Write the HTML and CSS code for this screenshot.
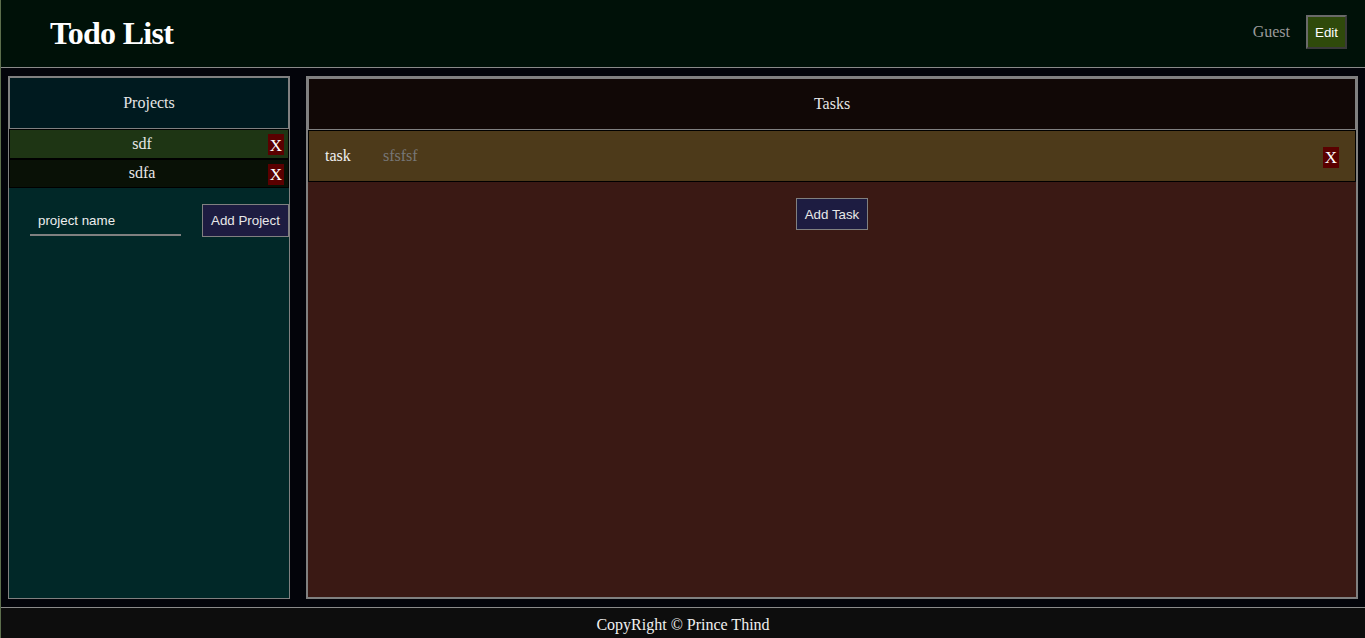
FILE: index.html
```html
<!DOCTYPE html>
<html lang="en">
<head>
<meta charset="utf-8">
<title>Todo List</title>
<link rel="stylesheet" href="styles.css">
</head>
<body>
<div class="app">
  <header class="topbar">
    <h1 class="title">Todo List</h1>
    <div class="user">
      <span class="guest">Guest</span>
      <button class="edit-btn" type="button">Edit</button>
    </div>
  </header>
  <main class="main">
    <section class="projects">
      <div class="panel-head">Projects</div>
      <div class="project project-active">
        <span class="project-name">sdf</span>
        <button class="del-btn" type="button">X</button>
      </div>
      <div class="project">
        <span class="project-name">sdfa</span>
        <button class="del-btn" type="button">X</button>
      </div>
      <form class="add-project">
        <input class="project-input" type="text" placeholder="project name">
        <button class="action-btn" type="button">Add Project</button>
      </form>
    </section>
    <section class="tasks">
      <div class="panel-head">Tasks</div>
      <div class="task">
        <span class="task-name">task</span>
        <span class="task-desc">sfsfsf</span>
        <button class="del-btn task-del" type="button">X</button>
      </div>
      <div class="task-actions">
        <button class="action-btn" type="button">Add Task</button>
      </div>
    </section>
  </main>
  <footer class="footer">CopyRight © Prince Thind</footer>
</div>
</body>
</html>
```

FILE: styles.css
```css
* { box-sizing: border-box; }

html, body {
  margin: 0;
  padding: 0;
  height: 100%;
}

body {
  background: #03040a;
  font-family: "Liberation Serif", "Times New Roman", serif;
  font-size: 16px;
  color: #e8e8e8;
}

.app {
  height: 100vh;
  display: flex;
  flex-direction: column;
  border-left: 1px solid #5c6e4c;
}

.topbar {
  height: 68px;
  flex: none;
  background: #001108;
  border-bottom: 1px solid #8a8a8a;
  display: flex;
  align-items: center;
  justify-content: space-between;
  padding: 0 18px 0 49px;
}

.title {
  margin: 0;
  font-size: 32px;
  font-weight: bold;
  color: #ffffff;
  letter-spacing: -0.7px;
}

.user {
  display: flex;
  align-items: center;
  gap: 16px;
  padding-bottom: 3px;
}

.guest {
  color: #9a9a9a;
  font-size: 16px;
}

.edit-btn {
  font-family: "Liberation Sans", Arial, sans-serif;
  font-size: 13.33px;
  color: #ffffff;
  background: #2f4a0b;
  border: 2px solid;
  border-color: #6a6a6a #3a3a3a #3a3a3a #6a6a6a;
  padding: 7px 7px;
  height: 34px;
}

.main {
  flex: 1;
  display: grid;
  grid-template-columns: 282px 1fr;
  gap: 16px;
  padding: 8px 7px 8px 7px;
  min-height: 0;
}

.projects {
  background: #012828;
  border: 1px solid #808080;
  display: flex;
  flex-direction: column;
}

.tasks {
  background: #3a1914;
  border: 2px solid #808080;
  display: flex;
  flex-direction: column;
}

.panel-head {
  height: 52px;
  flex: none;
  border: 1px solid #808080;
  display: flex;
  align-items: center;
  justify-content: center;
  color: #e6e6e6;
}

.projects .panel-head { background: #001a1f; }
.tasks .panel-head { background: #110806; }

.project {
  height: 29.5px;
  flex: none;
  border: 1px solid #000000;
  background: #091106;
  display: flex;
  align-items: center;
  padding-right: 4px;
}

.project-active { background: #1e3514; }

.project-name {
  flex: 1;
  text-align: center;
  padding-left: 6px;
}

.del-btn {
  font-family: "Liberation Serif", "Times New Roman", serif;
  font-size: 17px;
  font-weight: normal;
  line-height: 21px;
  color: #ffffff;
  background: #5a0000;
  border: none;
  padding: 1px 0 0 0;
  width: 16px;
  height: 21px;
  display: flex;
  align-items: center;
  justify-content: center;
}

.project .del-btn { margin-top: 2px; }

.add-project {
  display: flex;
  align-items: flex-end;
  gap: 21px;
  padding: 16px 0 0 21px;
  margin: 0;
}

.project-input {
  width: 151px;
  height: 32px;
  font-family: "Liberation Sans", Arial, sans-serif;
  font-size: 13.33px;
  color: #eeeeee;
  background: transparent;
  border: none;
  border-bottom: 2px solid #808080;
  padding: 2px 8px 0 8px;
  margin-bottom: 1px;
  outline: none;
}

.project-input::placeholder { color: #eeeeee; }

.action-btn {
  font-family: "Liberation Sans", Arial, sans-serif;
  font-size: 13.33px;
  color: #e8e8e8;
  background: #1d1c41;
  border: 1px solid #808080;
  padding: 8px 8px;
  height: 33px;
}

.task {
  height: 52px;
  flex: none;
  border: 1px solid #000000;
  background: #4d3a1a;
  display: flex;
  align-items: center;
  padding: 0 16px;
}

.task-name {
  width: 58px;
  color: #f0f0f0;
}

.task-desc {
  flex: 1;
  color: #777777;
}

.task-del { margin-top: 2px; }

.task-actions {
  display: flex;
  justify-content: center;
  padding-top: 16px;
}

.task-actions .action-btn { height: 32px; }

.footer {
  height: 31px;
  flex: none;
  background: #0d0d0d;
  border-top: 1px solid #8a8a8a;
  text-align: center;
  padding-top: 4px;
  line-height: 26px;
  color: #f0f0f0;
}
```
